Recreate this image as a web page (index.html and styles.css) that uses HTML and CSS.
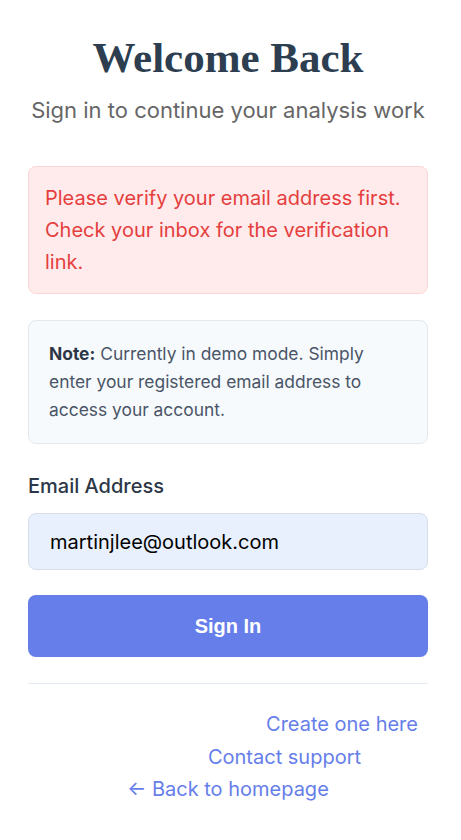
FILE: index.html
```html
<!DOCTYPE html>
<html lang="en">
<head>
<meta charset="utf-8">
<title>Welcome Back</title>
<link rel="stylesheet" href="styles.css">
</head>
<body>
<main class="auth">
  <header class="auth-head">
    <h1 class="title">Welcome Back</h1>
    <p class="subtitle">Sign in to continue your analysis work</p>
  </header>

  <div class="alert alert-error">Please verify your email address first. Check your inbox for the verification link.</div>

  <div class="note"><strong>Note:</strong> Currently in demo mode. Simply enter your registered email address to access your account.</div>

  <form class="form">
    <label class="label" for="email">Email Address</label>
    <input class="input" id="email" type="email" value="martinjlee@outlook.com">
    <button class="btn" type="button">Sign In</button>
  </form>

  <hr class="divider">

  <nav class="links">
    <a class="link link-create" href="#">Create one here</a>
    <a class="link link-support" href="#">Contact support</a>
    <a class="link" href="#">← Back to homepage</a>
  </nav>
</main>
</body>
</html>
```
FILE: styles.css
```css
* { box-sizing: border-box; }
html, body { margin: 0; padding: 0; background: #fff; }
body { font-family: Inter, "Noto Sans", sans-serif; }

.auth {
  width: 400px;
  margin-left: 28px;
  padding-top: 30px;
}

.auth-head { text-align: center; }
.title {
  margin: 0;
  font-family: "Liberation Serif", "Times New Roman", serif;
  font-weight: 700;
  font-size: 43px;
  line-height: 56px;
  color: #2c3e50;
}
.subtitle {
  margin: 8px 0 0;
  font-size: 22px;
  line-height: 32px;
  color: #666666;
}

.alert {
  margin-top: 40px;
  padding: 15px 16px;
  border: 1px solid #fdd5d5;
  border-radius: 8px;
  background: #ffebeb;
  color: #e53e3e;
  font-size: 20px;
  line-height: 32px;
}

.note {
  margin-top: 26px;
  padding: 19px 20px;
  border: 1px solid #e2e8f0;
  border-radius: 8px;
  background: #f7fafc;
  color: #4a5568;
  font-size: 17.4px;
  line-height: 28px;
}
.note strong { color: #2d3748; font-weight: 700; }

.form { display: flex; flex-direction: column; margin-top: 27px; }
.label {
  font-size: 20px;
  line-height: 30px;
  font-weight: 500;
  color: #2d3748;
}
.input {
  margin-top: 12px;
  height: 57px;
  padding: 0 21px;
  border: 1px solid #d6dee8;
  border-radius: 8px;
  background: #e8f0fe;
  font-family: Inter, "Noto Sans", sans-serif;
  font-size: 20px;
  color: #000;
  outline: none;
}
.btn {
  margin-top: 25px;
  height: 62px;
  border: 0;
  border-radius: 8px;
  background: #667eea;
  color: #fff;
  font-family: "Liberation Sans", Arial, sans-serif;
  font-weight: 700;
  font-size: 20px;
}

.divider {
  margin: 26px 0 0;
  border: 0;
  border-top: 1px solid #e2e8f0;
}

.links {
  display: flex;
  flex-direction: column;
  margin-top: 24px;
}
.link {
  text-align: center;
  font-size: 20px;
  line-height: 32.5px;
  color: #667eea;
  text-decoration: none;
}
.link-create { padding-left: 228px; }
.link-support { padding-left: 113px; }
```
